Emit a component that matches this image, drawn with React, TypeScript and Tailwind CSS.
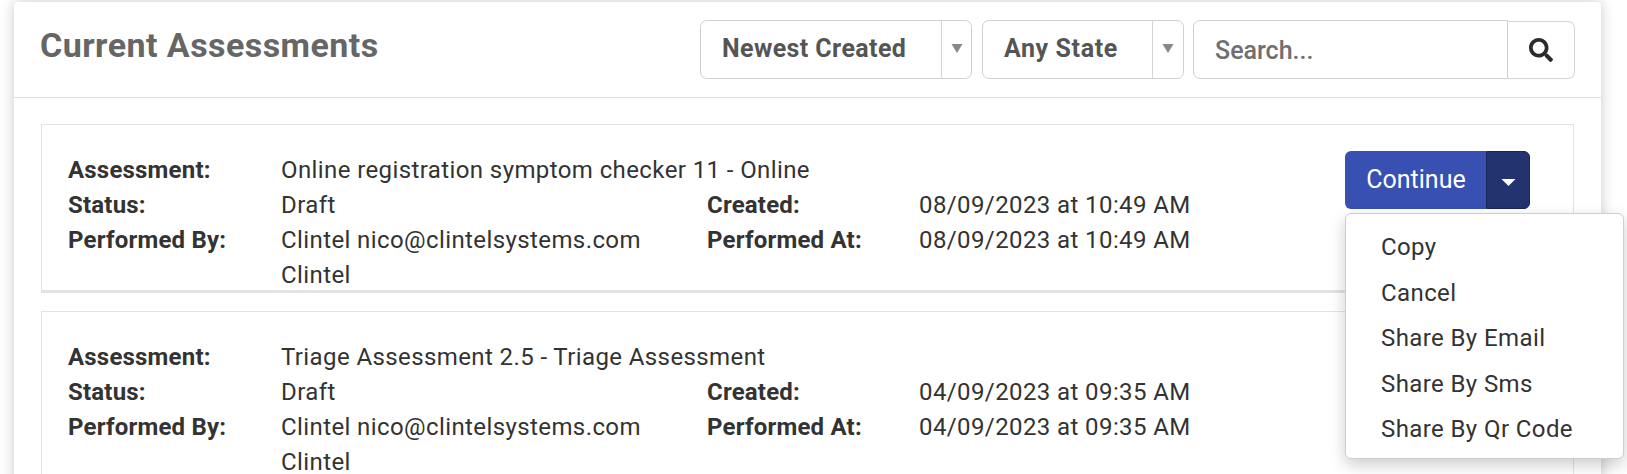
import { FaSearch } from "react-icons/fa";

const font = { fontFamily: '"Roboto", sans-serif' };

function Caret() {
  return (
    <svg width="12" height="12" viewBox="0 0 12 12" className="block">
      <path d="M0.5 2h11L6 11z" fill="#888" />
    </svg>
  );
}

function SelectBox({ label, textW, arrowW, track }: { label: string; textW: string; arrowW: string; track: string }) {
  return (
    <div className="flex h-[59px] rounded-[7px] border border-[#d0d0d0] bg-white">
      <div className={`${textW} ${track} flex items-center pl-[21px] pb-[1px] text-[25px] font-bold text-[#555]`}>{label}</div>
      <div className={`${arrowW} flex items-start justify-center border-l border-[#d5d5d5] pt-[21px]`}>
        <Caret />
      </div>
    </div>
  );
}

function Label({ children }: { children: React.ReactNode }) {
  return <div className="font-bold tracking-[0.2px] text-[#333]">{children}</div>;
}

function Card({ title, created, extra }: { title: string; created: string; extra: string }) {
  return (
    <div className={`flex h-[169px] items-start justify-between border border-[#e3e3e3] pl-[26px] pr-[43px] pt-[28px] ${extra}`}>
      <div className="grid grid-cols-[213px_426px_212px_280px] text-[24px] leading-[35px] tracking-[0.4px] text-[#333]">
        <Label>Assessment:</Label>
        <div className="col-span-3">{title}</div>
        <Label>Status:</Label>
        <div>Draft</div>
        <Label>Created:</Label>
        <div>{created}</div>
        <Label>Performed By:</Label>
        <div>Clintel nico@clintelsystems.com Clintel</div>
        <Label>Performed At:</Label>
        <div>{created}</div>
      </div>
      <div className="-mt-[2px] flex h-[58px] w-[185px] shrink-0 text-white">
        <div className="flex w-[141px] items-center justify-center rounded-l-[6px] bg-[#3750b2] pl-[1px] text-[25px]">Continue</div>
        <div className="flex flex-1 items-center justify-center rounded-r-[6px] border border-[#1a2755] bg-[#22336f] pl-[1px] pt-[5px]">
          <svg width="15" height="7" viewBox="0 0 15 7"><path d="M0.5 0h14L7.5 7z" fill="#fff" /></svg>
        </div>
      </div>
    </div>
  );
}

export default function App() {
  return (
    <div className="relative h-[474px] w-[1627px] overflow-hidden bg-white pl-[14px] pr-[26px] pt-[2px]" style={font}>
      <div className="h-[600px] rounded-[4px] bg-white shadow-[0_0_14px_rgba(0,0,0,0.22)]">
        <div className="flex h-[96px] items-start justify-between border-b border-[#e0e0e0] pl-[26px] pr-[26px]">
          <h1 className="pt-[18px] text-[34px] leading-[50px] font-bold tracking-[0.45px] text-[#666]">Current Assessments</h1>
          <div className="flex gap-[10px] pt-[18px]">
            <SelectBox label="Newest Created" textW="w-[240px]" arrowW="w-[30px]" track="tracking-[0.4px]" />
            <SelectBox label="Any State" textW="w-[169px]" arrowW="w-[31px]" track="tracking-[0.6px]" />
            <div className="-ml-px flex h-[59px] w-[382px] items-end">
              <div className="flex h-[59px] flex-1 items-center rounded-l-[7px] border border-[#d0d0d0] bg-white pl-[21px] pt-[3px] text-[25px] font-medium text-[#6f6f6f]">Search...</div>
              <div className="flex h-[58px] w-[67px] items-center justify-center rounded-r-[7px] border border-l-0 border-[#d5d5d5] text-[#2b2b2b]">
                <FaSearch size={24} />
              </div>
            </div>
          </div>
        </div>
        <div className="flex flex-col gap-[18px] pl-[27px] pr-[27px] pt-[26px]">
          <Card title="Online registration symptom checker 11 - Online" created="08/09/2023 at 10:49 AM" extra="border-b-[3px]" />
          <Card title="Triage Assessment 2.5 - Triage Assessment" created="04/09/2023 at 09:35 AM" extra="" />
        </div>
      </div>
      <div className="absolute left-[1345px] top-[213px] flex h-[246px] w-[279px] flex-col rounded-[6px] border border-[#cfcfcf] bg-white pl-[35px] pt-[11px] text-[24px] leading-[45.5px] tracking-[0.4px] text-[#333] shadow-[0_6px_16px_rgba(0,0,0,0.2)]">
        <div>Copy</div>
        <div>Cancel</div>
        <div>Share By Email</div>
        <div>Share By Sms</div>
        <div>Share By Qr Code</div>
      </div>
    </div>
  );
}
